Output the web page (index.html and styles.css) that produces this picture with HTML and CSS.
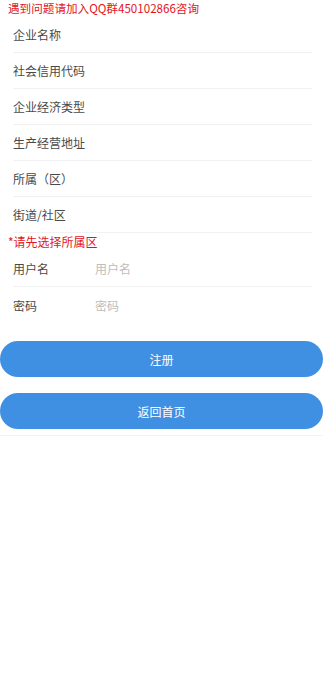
FILE: index.html
```html
<!DOCTYPE html>
<html lang="zh-CN">
<head>
<meta charset="utf-8">
<title>注册</title>
<link rel="stylesheet" href="styles.css">
</head>
<body>
<div class="notice">遇到问题请加入QQ群450102866咨询</div>
<div class="list">
  <div class="row">企业名称</div>
  <div class="row">社会信用代码</div>
  <div class="row">企业经济类型</div>
  <div class="row">生产经营地址</div>
  <div class="row">所属（区）</div>
  <div class="row">街道/社区</div>
</div>
<div class="hint">*请先选择所属区</div>
<div class="list">
  <div class="row field"><span class="label">用户名</span><span class="ph">用户名</span></div>
  <div class="row field last"><span class="label">密码</span><span class="ph">密码</span></div>
</div>
<div class="actions">
  <div class="btn">注册</div>
  <div class="btn">返回首页</div>
</div>
<div class="footer-line"></div>
</body>
</html>
```
FILE: styles.css
```css
html, body {
  margin: 0;
  padding: 0;
  background: #ffffff;
  font-family: "Noto Sans CJK SC", "Noto Sans", sans-serif;
}
.notice {
  color: #e3141e;
  font-size: 11.6px;
  line-height: 17px;
  height: 17px;
  padding-left: 8px;
  white-space: nowrap;
}
.list {
  display: flex;
  flex-direction: column;
}
.row {
  display: flex;
  align-items: center;
  height: 35px;
  margin: 0 11px 0 13px;
  border-bottom: 1px solid #f1f1f1;
  font-size: 12px;
  color: #4a4a4a;
}
.row.last {
  border-bottom: none;
  height: 36px;
}
.label {
  width: 82px;
}
.ph {
  color: #bdbdbd;
}
.hint {
  color: #e3141e;
  font-size: 12px;
  line-height: 18px;
  height: 18px;
  padding-left: 8px;
}
.actions {
  display: flex;
  flex-direction: column;
  gap: 16px;
  margin-top: 18px;
}
.btn {
  height: 36px;
  border-radius: 18px;
  background: #3f90e2;
  color: #ffffff;
  font-size: 12px;
  display: flex;
  align-items: center;
  justify-content: center;
}
.footer-line {
  margin-top: 6px;
  border-top: 1px solid #f3f3f3;
}
```
